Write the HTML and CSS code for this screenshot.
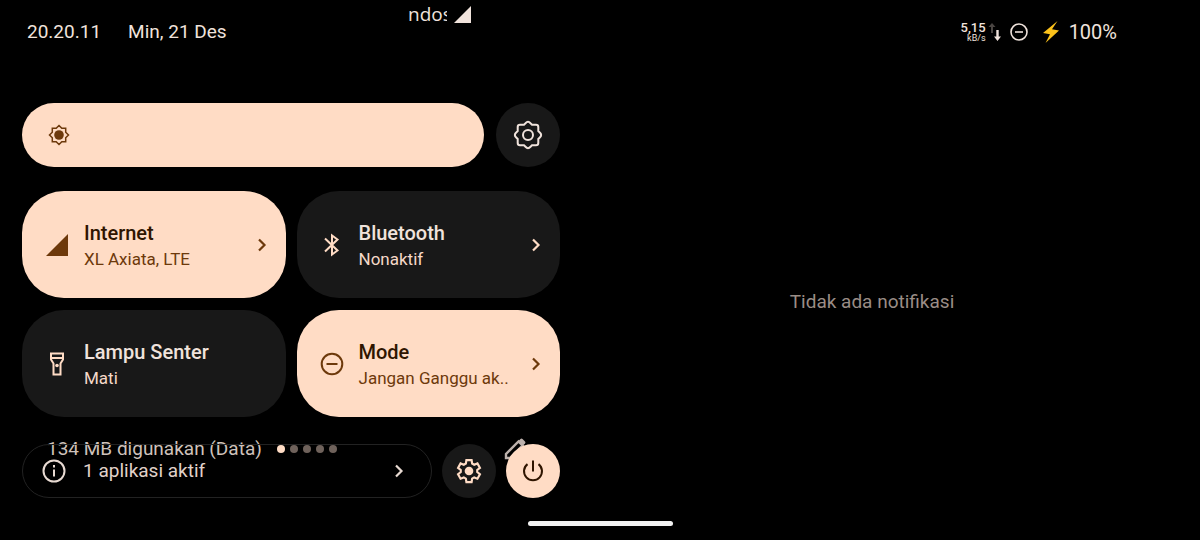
FILE: index.html
```html
<!DOCTYPE html>
<html lang="id">
<head>
<meta charset="utf-8">
<meta name="viewport" content="width=device-width, initial-scale=1">
<title>Setelan Cepat</title>
<link rel="stylesheet" href="styles.css">
</head>
<body>
<header class="status">
  <time class="clock">20.20.11</time>
  <time class="date">Min, 21 Des</time>
  <div class="carrier">
    <span class="carrier-name">ndos</span>
    <svg class="carrier-signal" viewBox="0 0 18 18" aria-hidden="true"><path d="M18 0v18H0z"/></svg>
  </div>
  <div class="status-icons">
    <div class="speed"><span class="speed-value">5,15</span><span class="speed-unit">kB/s</span></div>
    <svg class="arrows" viewBox="0 0 14 20" aria-hidden="true">
      <path class="arrow-up" d="M4 1 .5 5H3v6h2V5h2.500z"/>
      <path class="arrow-down" d="M9.500 19l3.500-4.500H10.700V8H8.300v6.500H6z"/>
    </svg>
    <svg class="dnd" viewBox="0 0 18 18" aria-hidden="true"><circle cx="9" cy="9" r="8"/><path d="M5 9h8"/></svg>
    <svg class="bolt" viewBox="0 0 18 22" aria-hidden="true"><path d="M15.500 0 1 12l7 1.200L3.500 22 17 9.500l-7-1.300z"/></svg>
    <span class="battery">100%</span>
  </div>
</header>

<main class="shade">
  <section class="quick">
    <div class="brightness-row">
      <label class="brightness">
        <svg class="sun" viewBox="0 0 24 24" aria-hidden="true"><path d="M12 2.500 14.800 5.300H18.700v3.900L21.500 12 18.700 14.800v3.900h-3.900L12 21.500 9.200 18.700H5.300v-3.900L2.500 12 5.300 9.200V5.300h3.900z"/><circle cx="12" cy="12" r="4.800"/></svg>
        <input class="slider" type="range" min="0" max="100" value="100" aria-label="Kecerahan">
      </label>
      <button class="round round-large" type="button" aria-label="Kecerahan otomatis">
        <svg class="flower" viewBox="0 0 30 30" aria-hidden="true"><path d="M12.500 3.200Q15 .500 17.500 3.200L19 4.700H23Q25.300 4.700 25.300 7V11L26.800 12.500Q29.500 15 26.800 17.500L25.300 19V23Q25.300 25.300 23 25.300H19L17.500 26.800Q15 29.500 12.500 26.800L11 25.300H7Q4.700 25.300 4.700 23V19L3.200 17.500Q.500 15 3.200 12.500L4.700 11V7Q4.700 4.700 7 4.700H11z"/><circle cx="15" cy="15" r="5"/></svg>
      </button>
    </div>

    <div class="tiles">
      <button class="tile tile-on" type="button">
        <svg class="tile-icon" viewBox="0 0 24 24" aria-hidden="true"><path class="fill" d="M23 1v22H1z"/></svg>
        <span class="tile-text"><span class="tile-name">Internet</span><span class="tile-state">XL Axiata, LTE</span></span>
        <svg class="chevron" viewBox="0 0 10 14" aria-hidden="true"><path d="M2 1.500 7.500 7 2 12.500"/></svg>
      </button>
      <button class="tile" type="button">
        <svg class="tile-icon" viewBox="0 0 24 24" aria-hidden="true"><path class="line" d="M5 5.500 17.500 17.500 12 21.500V2.500L17.500 6.500 5 18.500"/></svg>
        <span class="tile-text"><span class="tile-name">Bluetooth</span><span class="tile-state">Nonaktif</span></span>
        <svg class="chevron" viewBox="0 0 10 14" aria-hidden="true"><path d="M2 1.500 7.500 7 2 12.500"/></svg>
      </button>
      <button class="tile" type="button">
        <svg class="tile-icon" viewBox="0 0 24 24" aria-hidden="true"><path class="line" d="M6 1.500h12v6l-2.500 4v11h-7v-11L6 7.500zM6 6h12"/><circle class="fill" cx="12" cy="13.500" r="1.800"/></svg>
        <span class="tile-text"><span class="tile-name">Lampu Senter</span><span class="tile-state">Mati</span></span>
      </button>
      <button class="tile tile-on" type="button">
        <svg class="tile-icon" viewBox="0 0 24 24" aria-hidden="true"><circle class="line" cx="12" cy="12" r="10.300"/><path class="line" d="M6.500 12h11"/></svg>
        <span class="tile-text"><span class="tile-name">Mode</span><span class="tile-state">Jangan Ganggu ak..</span></span>
        <svg class="chevron" viewBox="0 0 10 14" aria-hidden="true"><path d="M2 1.500 7.500 7 2 12.500"/></svg>
      </button>
    </div>

    <div class="footer">
      <div class="pager">
        <span class="usage">134 MB digunakan (Data)</span>
        <span class="dots"><i class="dot dot-current"></i><i class="dot"></i><i class="dot"></i><i class="dot"></i><i class="dot"></i></span>
        <svg class="pencil" viewBox="0 0 22 22" aria-hidden="true"><path d="M2 20v-4L14.500 3.500l4 4L6 20z"/><path class="pencil-cap" d="M14 3.500 16.500 1q1-1 2 0L21 3.500q1 1 0 2L18.500 8z"/></svg>
      </div>
      <button class="apps" type="button">
        <svg class="tile-icon" viewBox="0 0 24 24" aria-hidden="true"><circle class="line" cx="12" cy="12" r="10.500"/><path class="line" d="M12 10.500v7M12 6v2.500"/></svg>
        <span class="apps-text">1 aplikasi aktif</span>
        <svg class="chevron" viewBox="0 0 10 14" aria-hidden="true"><path d="M2 1.500 7.500 7 2 12.500"/></svg>
      </button>
      <button class="round" type="button" aria-label="Setelan">
        <svg class="gear" viewBox="0 0 24 24" aria-hidden="true"><path d="M9.600 1.900h4.800l.5 3.200 1.900 1.100 3-1.200 2.300 4.100-2.500 2v1.900l2.500 2-2.300 4.100-3-1.200-1.900 1.100-.5 3.200H9.600l-.5-3.200-1.900-1.100-3 1.200-2.300-4.100 2.500-2v-1.900l-2.500-2 2.300-4.100 3 1.200 1.900-1.100z"/><circle cx="12" cy="12" r="4"/></svg>
      </button>
      <button class="round round-power" type="button" aria-label="Daya">
        <svg class="power" viewBox="0 0 24 24" aria-hidden="true"><path d="M12 1.500v11M6.500 5.100a9 9 0 1 0 11 0"/></svg>
      </button>
    </div>
  </section>

  <section class="notifications">
    <p class="empty">Tidak ada notifikasi</p>
  </section>
</main>
<div class="handle"></div>
</body>
</html>
```
FILE: styles.css
```css
* { box-sizing: border-box; }

body {
  --peach: #ffdcc5;
  --brown: #6d390b;
  --surface: #181818;
  --text: #f0e3dc;
  margin: 0;
  min-height: 100vh;
  display: flex;
  flex-direction: column;
  background: #000;
  color: var(--text);
  font-family: Roboto, "Open Sans", sans-serif;
  font-size: 19px;
  line-height: 24px;
}

button {
  border: 0;
  padding: 0;
  background: none;
  color: inherit;
  font: inherit;
  text-align: left;
  cursor: pointer;
}

svg { display: block; flex: none; }

.status {
  position: relative;
  display: flex;
  align-items: center;
  gap: 27px;
  height: 64px;
  padding: 0 83px 0 27px;
}

.carrier {
  position: absolute;
  top: 4px;
  left: 34%;
  display: flex;
  align-items: center;
  gap: 7px;
  font-family: "Open Sans", sans-serif;
  font-size: 19px;
  line-height: 20px;
}
.carrier-name { width: 39px; overflow: hidden; }
.carrier-signal { width: 17px; height: 17px; fill: var(--text); }

.status-icons { margin-left: auto; display: flex; align-items: center; }
.speed { display: flex; flex-direction: column; align-items: flex-end; }
.speed-value { font-size: 13px; line-height: 12px; font-weight: 500; }
.speed-unit { font-size: 9px; line-height: 8px; }
.arrows { width: 14px; height: 20px; margin: 0 8px 0 2px; }
.arrow-up { fill: #4a4542; }
.arrow-down { fill: var(--text); }
.dnd { width: 18px; height: 18px; fill: none; stroke: var(--text); stroke-width: 1.6; }
.bolt { width: 18px; height: 22px; margin: 0 9px 0 14px; fill: #fcc21b; }
.battery { font-size: 20px; }

.shade {
  flex: 1;
  display: grid;
  grid-template-columns: 538fr 576fr;
  gap: 24px;
  padding: 39px 40px 22px 22px;
}

.brightness-row { display: flex; gap: 12px; margin-bottom: 24px; }
.brightness { position: relative; flex: 1; display: flex; }
.slider {
  appearance: none;
  width: 100%;
  height: 64px;
  margin: 0;
  border-radius: 32px;
  background: var(--peach);
}
.slider::-webkit-slider-thumb { appearance: none; width: 4px; height: 64px; background: transparent; }
.sun { position: absolute; left: 25px; top: 20px; width: 24px; height: 24px; fill: none; stroke: var(--brown); stroke-width: 1.5; }
.sun circle { fill: var(--brown); stroke: none; }

.round {
  flex: none;
  display: grid;
  place-items: center;
  width: 54px;
  height: 54px;
  border-radius: 50%;
  background: var(--surface);
}
.round-large { width: 64px; height: 64px; }
.round-power { background: var(--peach); }
.flower, .gear, .power { fill: none; stroke: var(--text); stroke-width: 2; }
.flower { width: 30px; height: 30px; }
.gear { width: 26px; height: 26px; stroke: var(--peach); }
.gear circle { fill: var(--peach); stroke: none; }
.power { width: 24px; height: 24px; stroke: #2f1500; }

.tiles {
  display: grid;
  grid-template-columns: 1fr 1fr;
  gap: 12px 11px;
  margin-bottom: 27px;
}
.tile {
  display: flex;
  align-items: center;
  min-width: 0;
  height: 107px;
  padding: 0 19px 0 23px;
  border-radius: 42px;
  background: var(--surface);
  color: var(--text);
}
.tile-on { background: var(--peach); color: #2f1500; }
.tile-icon { width: 24px; height: 24px; margin-right: 15px; color: var(--peach); }
.tile-on .tile-icon, .tile-on .tile-state, .tile-on .chevron { color: var(--brown); }
.fill { fill: currentColor; }
.line { fill: none; stroke: currentColor; stroke-width: 2; }
.tile-text { flex: 1; min-width: 0; display: flex; flex-direction: column; gap: 2px; padding-top: 3px; white-space: nowrap; }
.tile-name { font-weight: 500; font-size: 20px; }
.tile-state { font-size: 17px; color: #f5d9c8; }
.chevron { width: 10px; height: 14px; fill: none; stroke: currentColor; stroke-width: 2.2; color: var(--peach); }

.footer { position: relative; display: flex; gap: 10px; }
.apps {
  position: relative;
  flex: 1;
  display: flex;
  align-items: center;
  height: 54px;
  padding: 0 27px 0 19px;
  border: 1px solid #222;
  border-radius: 27px;
  color: #e0d2ca;
}
.apps .tile-icon, .apps .chevron { color: #e8dad2; }
.apps .tile-icon { margin-right: 17px; }
.apps-text { flex: 1; font-size: 19px; }
.footer .round { position: relative; }

.pager {
  position: absolute;
  top: -7px;
  left: 25px;
  right: 34px;
  display: flex;
  align-items: center;
  color: #cfc2bb;
}
.usage { white-space: nowrap; }
.dots { display: flex; gap: 5px; margin-left: 15px; }
.dot { width: 8px; height: 8px; border-radius: 50%; background: #6f625b; }
.dot-current { background: var(--peach); }
.pencil { width: 22px; height: 22px; margin-left: auto; fill: none; stroke: #bdb1ac; stroke-width: 2.4; }
.pencil-cap { fill: #bdb1ac; stroke: none; }

.notifications { display: grid; place-items: center; padding-top: 2px; }
.empty { margin: 0; color: #9a8d86; }

.handle {
  width: 145px;
  height: 5px;
  margin: 0 auto 14px;
  border-radius: 3px;
  background: #f2f2f2;
}
```
